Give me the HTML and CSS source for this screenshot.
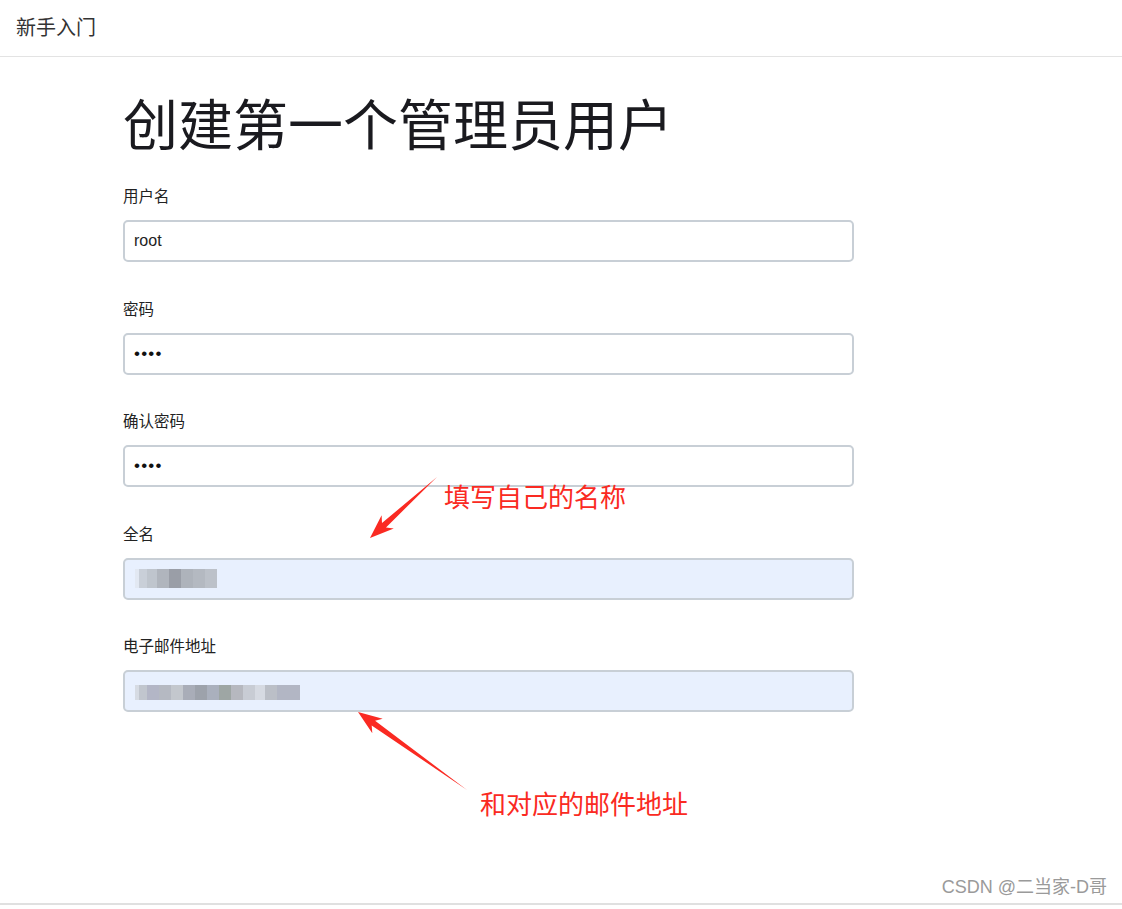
FILE: index.html
```html
<!DOCTYPE html>
<html lang="zh-CN">
<head>
<meta charset="utf-8">
<title>新手入门</title>
<link rel="stylesheet" href="styles.css">
</head>
<body>
<header class="topbar"><span class="topbar-title">新手入门</span></header>
<main class="content">
  <h1 class="page-title">创建第一个管理员用户</h1>
  <form class="form">
    <div class="field">
      <label class="field-label">用户名</label>
      <div class="input">root</div>
    </div>
    <div class="field">
      <label class="field-label">密码</label>
      <div class="input input-password">••••</div>
    </div>
    <div class="field">
      <label class="field-label">确认密码</label>
      <div class="input input-password">••••</div>
    </div>
    <div class="field">
      <label class="field-label">全名</label>
      <div class="input input-autofill"><span class="mosaic mosaic-name"></span></div>
    </div>
    <div class="field">
      <label class="field-label">电子邮件地址</label>
      <div class="input input-autofill"><span class="mosaic mosaic-email"></span></div>
    </div>
  </form>
</main>
<footer class="bottombar"></footer>

<svg class="annotations" width="1122" height="909" viewBox="0 0 1122 909" xmlns="http://www.w3.org/2000/svg">
  <polygon fill="#fa2a22" points="437,477 386,527.4 393.8,528.4 370,538 381.6,515.2 382,523"/>
  <polygon fill="#fa2a22" points="467,790 375.1,720.7 382.7,718.7 358,712 372.3,733.3 371.7,725.5"/>
</svg>
<div class="note note-name">填写自己的名称</div>
<div class="note note-email">和对应的邮件地址</div>
<div class="watermark">CSDN @二当家-D哥</div>
</body>
</html>
```
FILE: styles.css
```css
html, body {
  margin: 0;
  padding: 0;
}
body {
  position: relative;
  width: 1122px;
  height: 909px;
  overflow: hidden;
  display: flex;
  flex-direction: column;
  background: #ffffff;
  color: #212529;
  font-family: "Liberation Sans", "Noto Sans CJK SC", sans-serif;
}
.topbar {
  height: 56px;
  border-bottom: 1px solid #e3e3e3;
  display: flex;
  align-items: center;
  padding-left: 16px;
  box-sizing: content-box;
  flex-shrink: 0;
}
.topbar-title {
  font-family: "Noto Sans CJK SC", sans-serif;
  font-size: 20px;
  color: #333;
  margin-top: -4px;
}
.content {
  padding-left: 123px;
}
.page-title {
  margin: 31px 0 31px;
  font-family: "Noto Sans CJK SC", sans-serif;
  font-weight: 400;
  font-size: 55px;
  line-height: 66px;
  color: #1a1a1f;
  letter-spacing: 0;
}
.form {
  width: 731px;
  display: flex;
  flex-direction: column;
  gap: 35.5px;
}
.field {
  display: flex;
  flex-direction: column;
  gap: 15px;
}
.field-label {
  font-family: "Noto Sans CJK SC", sans-serif;
  font-size: 15.5px;
  line-height: 20px;
  color: #222;
}
.input {
  height: 42px;
  box-sizing: border-box;
  border: 2px solid #c8cfd6;
  border-radius: 5px;
  background: #fff;
  padding: 0 9px;
  display: flex;
  align-items: center;
  font-size: 16px;
  color: #222;
}
.input-password {
  font-size: 17px;
  letter-spacing: 1.2px;
  color: #111;
}
.input-autofill {
  background: #e8f0fe;
}
.mosaic {
  display: block;
  height: 19px;
  margin-left: 1px;
}
.mosaic-name {
  width: 82px;
  background: linear-gradient(to right,
    #e2e8f2 0 4px, #c9cfd8 4px 12px, #bfc5cd 12px 22px, #b0b5bd 22px 34px,
    #9a9ea7 34px 46px, #aeb3bb 46px 58px, #b4b9c1 58px 70px, #bcc1c9 70px 82px);
}
.mosaic-email {
  width: 165px;
  height: 15px;
  margin-top: 2px;
  background: linear-gradient(to right,
    #d6dbe3 0 4px, #c1c6ce 4px 12px, #b3b6c6 12px 24px, #b5b9c2 24px 36px,
    #c3c7cd 36px 48px, #a9adb8 48px 60px, #9da2ab 60px 72px, #aab0bd 72px 84px,
    #9ea6a4 84px 96px, #b6b8bf 96px 108px, #c8ccd4 108px 120px, #d6dae2 120px 130px,
    #bbbfc7 130px 142px, #b2b6c4 142px 165px);
}
.bottombar {
  margin-top: auto;
  height: 4px;
  border-top: 2px solid #e0e0e0;
  flex-shrink: 0;
}
.annotations {
  position: absolute;
  left: 0;
  top: 0;
  pointer-events: none;
}
.note {
  position: absolute;
  font-family: "Noto Sans CJK SC", sans-serif;
  font-size: 26px;
  line-height: 30px;
  color: #fa2a22;
  white-space: nowrap;
}
.note-name {
  left: 444px;
  top: 481px;
}
.note-email {
  left: 480px;
  top: 788px;
}
.watermark {
  position: absolute;
  right: 15px;
  top: 876px;
  font-family: "Liberation Sans", "Noto Sans CJK SC", sans-serif;
  font-size: 18px;
  line-height: 22px;
  color: #9a9a9a;
  white-space: nowrap;
}
```
